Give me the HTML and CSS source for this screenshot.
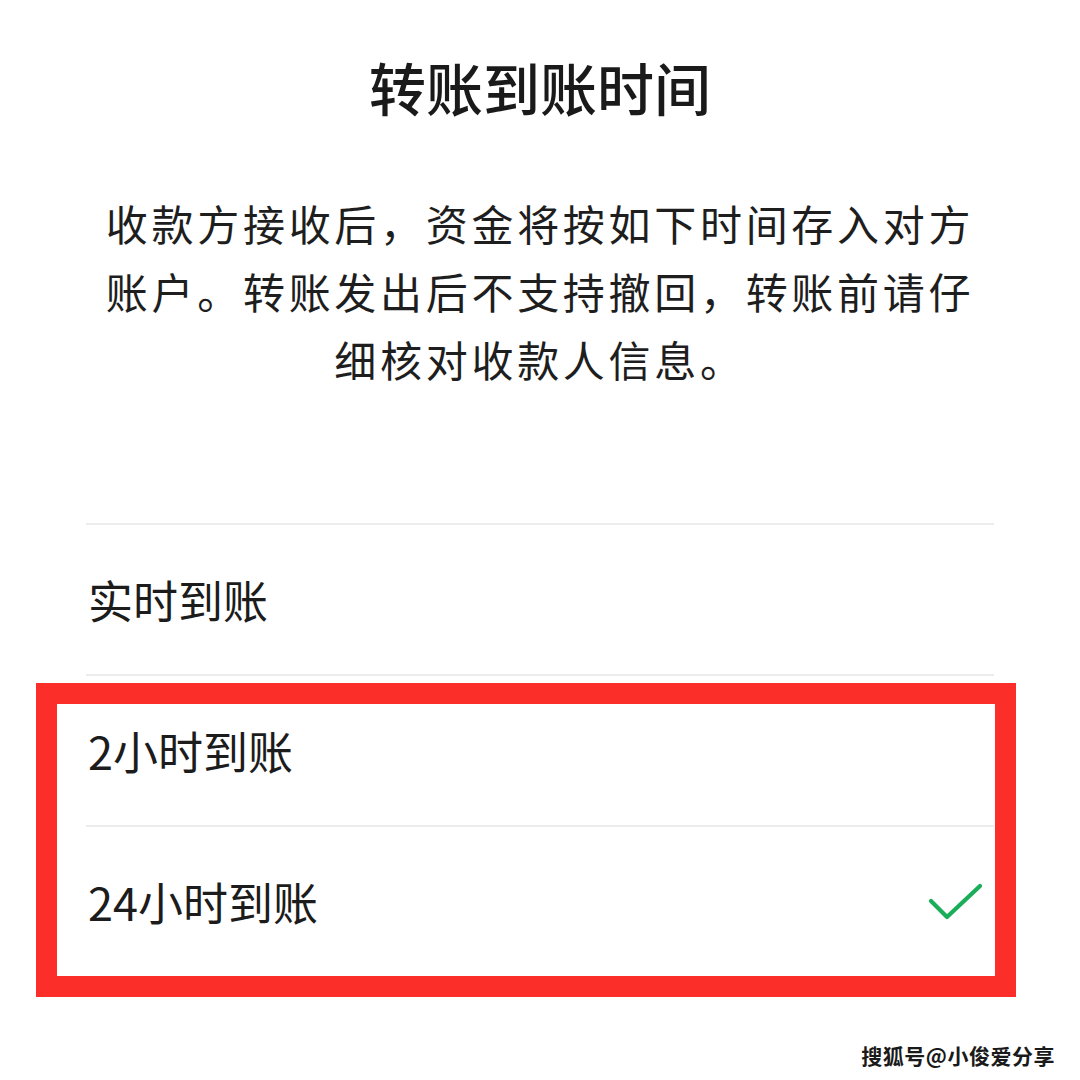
FILE: index.html
```html
<!DOCTYPE html>
<html lang="zh-CN">
<head>
<meta charset="utf-8">
<link rel="stylesheet" href="styles.css">
</head>
<body>
<div class="page">
  <h1 class="title">转账到账时间</h1>
  <p class="desc">收款方接收后，资金将按如下时间存入对方<br>账户。转账发出后不支持撤回，转账前请仔<br>细核对收款人信息。</p>
  <ul class="options">
    <li class="option">实时到账</li>
    <li class="option">2小时到账</li>
    <li class="option">24小时到账
      <svg class="check" width="56" height="40" viewBox="0 0 56 40"><path d="M3 19 L19 35 L52 4" fill="none" stroke="#1aad5a" stroke-width="4.2" stroke-linecap="round" stroke-linejoin="round"/></svg>
    </li>
  </ul>
  <div class="highlight"></div>
  <div class="watermark">搜狐号@小俊爱分享</div>
</div>
</body>
</html>
```
FILE: styles.css
```css
html, body {
  margin: 0;
  padding: 0;
  background: #ffffff;
}
.page {
  position: relative;
  width: 1080px;
  height: 1080px;
  overflow: hidden;
  font-family: "Noto Sans CJK SC", "Noto Sans", sans-serif;
  color: #1c1c1c;
  display: flex;
  flex-direction: column;
  align-items: center;
}
.title {
  margin: 50px 0 0;
  font-size: 57px;
  line-height: 72px;
  font-weight: 500;
  letter-spacing: 0;
  color: #1a1a1a;
}
.desc {
  margin: 67px 0 0;
  width: 880px;
  text-align: center;
  font-size: 42px;
  letter-spacing: 3.7px;
  line-height: 68px;
  color: #1e1e1e;
}
.options {
  list-style: none;
  margin: 130px 0 0;
  padding: 0;
  width: 908px;
}
.option {
  display: flex;
  align-items: center;
  justify-content: space-between;
  height: 151px;
  border-top: 2px solid #ececec;
  box-sizing: border-box;
  padding: 0 10px 0 2px;
  font-size: 45px;
  color: #1c1c1c;
}
.check {
  display: block;
}
.highlight {
  position: absolute;
  left: 36px;
  top: 683px;
  width: 980px;
  height: 314px;
  box-sizing: border-box;
  border: 21px solid #fc2e2a;
}
.watermark {
  position: absolute;
  right: 25px;
  bottom: 10px;
  font-size: 21px;
  font-weight: 700;
  color: #1a1a1a;
  letter-spacing: 0.5px;
}
```
